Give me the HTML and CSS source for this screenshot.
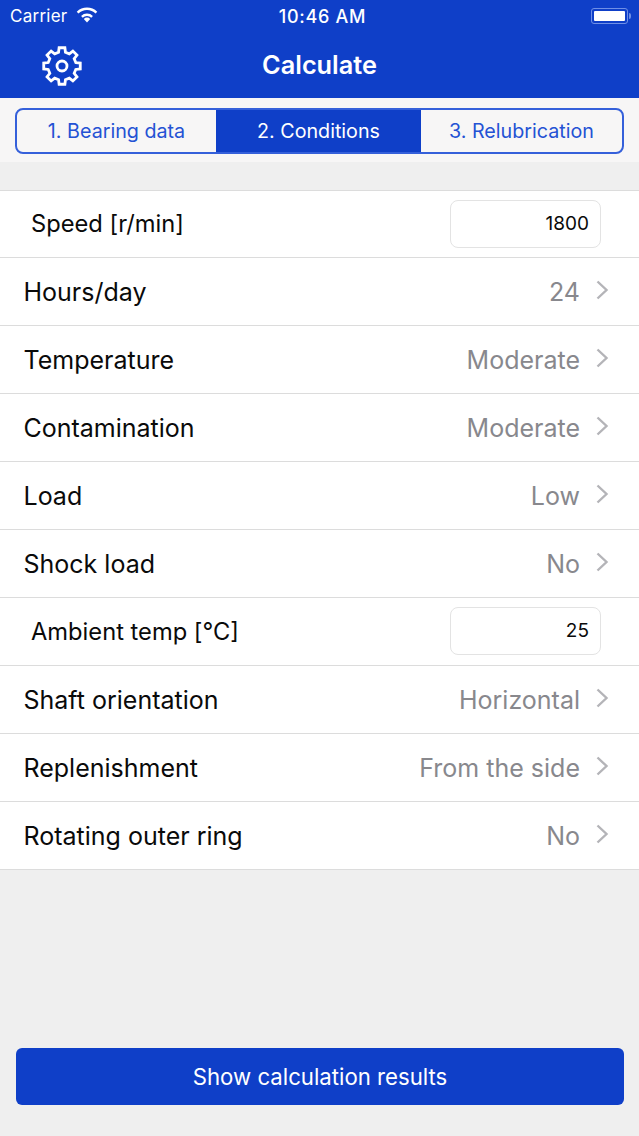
FILE: index.html
```html
<!DOCTYPE html>
<html lang="en">
<head>
    <meta charset="UTF-8">
    <meta name="viewport" content="width=device-width, initial-scale=1.0">
    <title>Calculate</title>
    <link rel="stylesheet" href="styles.css">
</head>
<body>
    <div class="container">
        <div class="header">
            <div class="status-bar">
                <div class="status-left">
                    <span>Carrier</span>
                    <svg class="wifi" width="22" height="16" viewBox="0 0 22 16">
                        <path d="M11 15.5l-3.2-3.6a4.6 4.6 0 0 1 6.4 0z" fill="#fff"/>
                        <path d="M5.9 9.8a7.4 7.4 0 0 1 10.2 0" fill="none" stroke="#fff" stroke-width="2.4"/>
                        <path d="M1.6 5.6a13.4 13.4 0 0 1 18.8 0" fill="none" stroke="#fff" stroke-width="2.4"/>
                    </svg>
                </div>
                <div class="status-time">10:46 AM</div>
                <div class="battery">
                    <div class="battery-body"><div class="battery-level"></div></div>
                    <div class="battery-cap"></div>
                </div>
            </div>
            <div class="nav-bar">
                <svg class="gear" width="40" height="40" viewBox="0 0 40 40">
                    <path d="M33.78 16.56L38.27 17.11V22.89L33.78 23.44L32.18 27.31L34.96 30.88L30.88 34.96L27.31 32.18L23.44 33.78L22.89 38.27H17.11L16.56 33.78L12.69 32.18L9.12 34.96L5.04 30.88L7.82 27.31L6.22 23.44L1.73 22.89V17.11L6.22 16.56L7.82 12.69L5.04 9.12L9.12 5.04L12.69 7.82L16.56 6.22L17.11 1.73H22.89L23.44 6.22L27.31 7.82L30.88 5.04L34.96 9.12L32.18 12.69z" fill="none" stroke="#fff" stroke-width="2.8" stroke-linejoin="miter"/>
                    <circle cx="20" cy="20" r="5" fill="none" stroke="#fff" stroke-width="2.8"/>
                </svg>
                <h1>Calculate</h1>
            </div>
        </div>

        <div class="tabs-strip">
            <div class="tabs">
                <div class="tab tab-first">1. Bearing data</div>
                <div class="tab tab-second active">2. Conditions</div>
                <div class="tab tab-third">3. Relubrication</div>
            </div>
        </div>

        <div class="list">
            <div class="row input-row">
                <span class="row-label">Speed [r/min]</span>
                <div class="row-input">1800</div>
            </div>
            <div class="row">
                <span class="row-label">Hours/day</span>
                <span class="row-value">24</span>
                <svg class="chevron" width="14" height="20" viewBox="0 0 14 20"><path d="M2.5 1.5l9 8.5-9 8.5" fill="none" stroke="#b4b4b8" stroke-width="2.4"/></svg>
            </div>
            <div class="row">
                <span class="row-label">Temperature</span>
                <span class="row-value">Moderate</span>
                <svg class="chevron" width="14" height="20" viewBox="0 0 14 20"><path d="M2.5 1.5l9 8.5-9 8.5" fill="none" stroke="#b4b4b8" stroke-width="2.4"/></svg>
            </div>
            <div class="row">
                <span class="row-label">Contamination</span>
                <span class="row-value">Moderate</span>
                <svg class="chevron" width="14" height="20" viewBox="0 0 14 20"><path d="M2.5 1.5l9 8.5-9 8.5" fill="none" stroke="#b4b4b8" stroke-width="2.4"/></svg>
            </div>
            <div class="row">
                <span class="row-label">Load</span>
                <span class="row-value">Low</span>
                <svg class="chevron" width="14" height="20" viewBox="0 0 14 20"><path d="M2.5 1.5l9 8.5-9 8.5" fill="none" stroke="#b4b4b8" stroke-width="2.4"/></svg>
            </div>
            <div class="row">
                <span class="row-label">Shock load</span>
                <span class="row-value">No</span>
                <svg class="chevron" width="14" height="20" viewBox="0 0 14 20"><path d="M2.5 1.5l9 8.5-9 8.5" fill="none" stroke="#b4b4b8" stroke-width="2.4"/></svg>
            </div>
            <div class="row input-row">
                <span class="row-label">Ambient temp [°C]</span>
                <div class="row-input">25</div>
            </div>
            <div class="row">
                <span class="row-label">Shaft orientation</span>
                <span class="row-value">Horizontal</span>
                <svg class="chevron" width="14" height="20" viewBox="0 0 14 20"><path d="M2.5 1.5l9 8.5-9 8.5" fill="none" stroke="#b4b4b8" stroke-width="2.4"/></svg>
            </div>
            <div class="row">
                <span class="row-label">Replenishment</span>
                <span class="row-value">From the side</span>
                <svg class="chevron" width="14" height="20" viewBox="0 0 14 20"><path d="M2.5 1.5l9 8.5-9 8.5" fill="none" stroke="#b4b4b8" stroke-width="2.4"/></svg>
            </div>
            <div class="row">
                <span class="row-label">Rotating outer ring</span>
                <span class="row-value">No</span>
                <svg class="chevron" width="14" height="20" viewBox="0 0 14 20"><path d="M2.5 1.5l9 8.5-9 8.5" fill="none" stroke="#b4b4b8" stroke-width="2.4"/></svg>
            </div>
        </div>

        <div class="footer">
            <div class="button">Show calculation results</div>
        </div>
    </div>
</body>
</html>
```

FILE: styles.css
```css
:root {
    --blue: #0f3fc8;
    --blue-line: #3560da;
    --page: #efefef;
    --line: #dcdcdc;
    --grey-text: #88888d;
}

body {
    margin: 0;
    padding: 0;
    font-family: Inter, 'Liberation Sans', Arial, sans-serif;
    background-color: var(--page);
    color: #0a0a0a;
}

.container {
    display: flex;
    flex-direction: column;
    height: 1136px;
    box-sizing: border-box;
}

.header {
    background-color: var(--blue);
    color: white;
    height: 98px;
    flex-shrink: 0;
}

/* Status bar */
.status-bar {
    display: flex;
    align-items: center;
    justify-content: space-between;
    height: 32px;
    padding: 0 8px 0 10px;
    font-size: 18px;
    position: relative;
}

.status-left {
    display: flex;
    align-items: center;
    gap: 9px;
    font-size: 17px;
    letter-spacing: 0.25px;
}

.status-time {
    font-weight: 500;
    letter-spacing: 0.7px;
    position: absolute;
    left: 6px;
    right: 0;
    text-align: center;
}

.wifi {
    margin-top: -3px;
}

.battery {
    display: flex;
    align-items: center;
    gap: 1px;
}

.battery-body {
    width: 31px;
    height: 10px;
    border: 1px solid #6f8fe6;
    border-radius: 3px;
    padding: 2px;
}

.battery-level {
    height: 100%;
    background-color: white;
    border-radius: 1px;
}

.battery-cap {
    width: 2px;
    height: 6px;
    background-color: #6f8fe6;
    border-radius: 0 2px 2px 0;
}

/* Nav bar */
.nav-bar {
    display: flex;
    align-items: center;
    justify-content: center;
    height: 64px;
    position: relative;
}

.nav-bar h1 {
    margin: 0;
    font-size: 25.3px;
    font-weight: 600;
}

.gear {
    position: absolute;
    left: 42px;
    top: 14px;
}

/* Tabs */
.tabs-strip {
    background-color: #f7f6f6;
    height: 64px;
    padding: 10px 15px 0;
    box-sizing: border-box;
    flex-shrink: 0;
}

.tabs {
    display: flex;
    height: 46px;
    border: 2px solid var(--blue-line);
    border-radius: 8px;
    box-sizing: border-box;
    overflow: hidden;
}

.tab {
    display: flex;
    align-items: center;
    justify-content: center;
    font-size: 19.7px;
    color: #2452d4;
}

.tab-first {
    flex: 199;
}

.tab-second {
    flex: 205;
}

.tab-third {
    flex: 201;
}

.tab.active {
    background-color: var(--blue);
    color: white;
}

/* List */
.list {
    margin-top: 28px;
    background-color: white;
    border-top: 1px solid var(--line);
}

.row {
    display: flex;
    align-items: center;
    height: 68px;
    padding: 0 30px 0 23.5px;
    border-bottom: 1px solid var(--line);
    box-sizing: border-box;
    font-size: 25px;
}

.row:first-child {
    height: 67px;
}

.row-label {
    flex: 1;
}

.row-value {
    color: var(--grey-text);
    margin-right: 15px;
}

.chevron {
    margin-top: -3px;
}

.input-row {
    padding: 0 38px 0 31px;
}

.input-row .row-label {
    font-size: 23.7px;
    margin-top: -1px;
}

.row-input {
    width: 151px;
    height: 48px;
    box-sizing: border-box;
    border: 1px solid #e3e3e3;
    border-radius: 8px;
    padding: 0 11px;
    font-size: 19px;
    line-height: 46px;
    text-align: right;
    margin-top: -1px;
}

/* Footer button */
.footer {
    flex: 1;
    display: flex;
    align-items: flex-end;
    padding: 0 15px 31px 16px;
}

.button {
    flex: 1;
    height: 57px;
    line-height: 58px;
    text-align: center;
    background-color: var(--blue);
    color: white;
    border-radius: 6px;
    font-size: 22.2px;
}
```
